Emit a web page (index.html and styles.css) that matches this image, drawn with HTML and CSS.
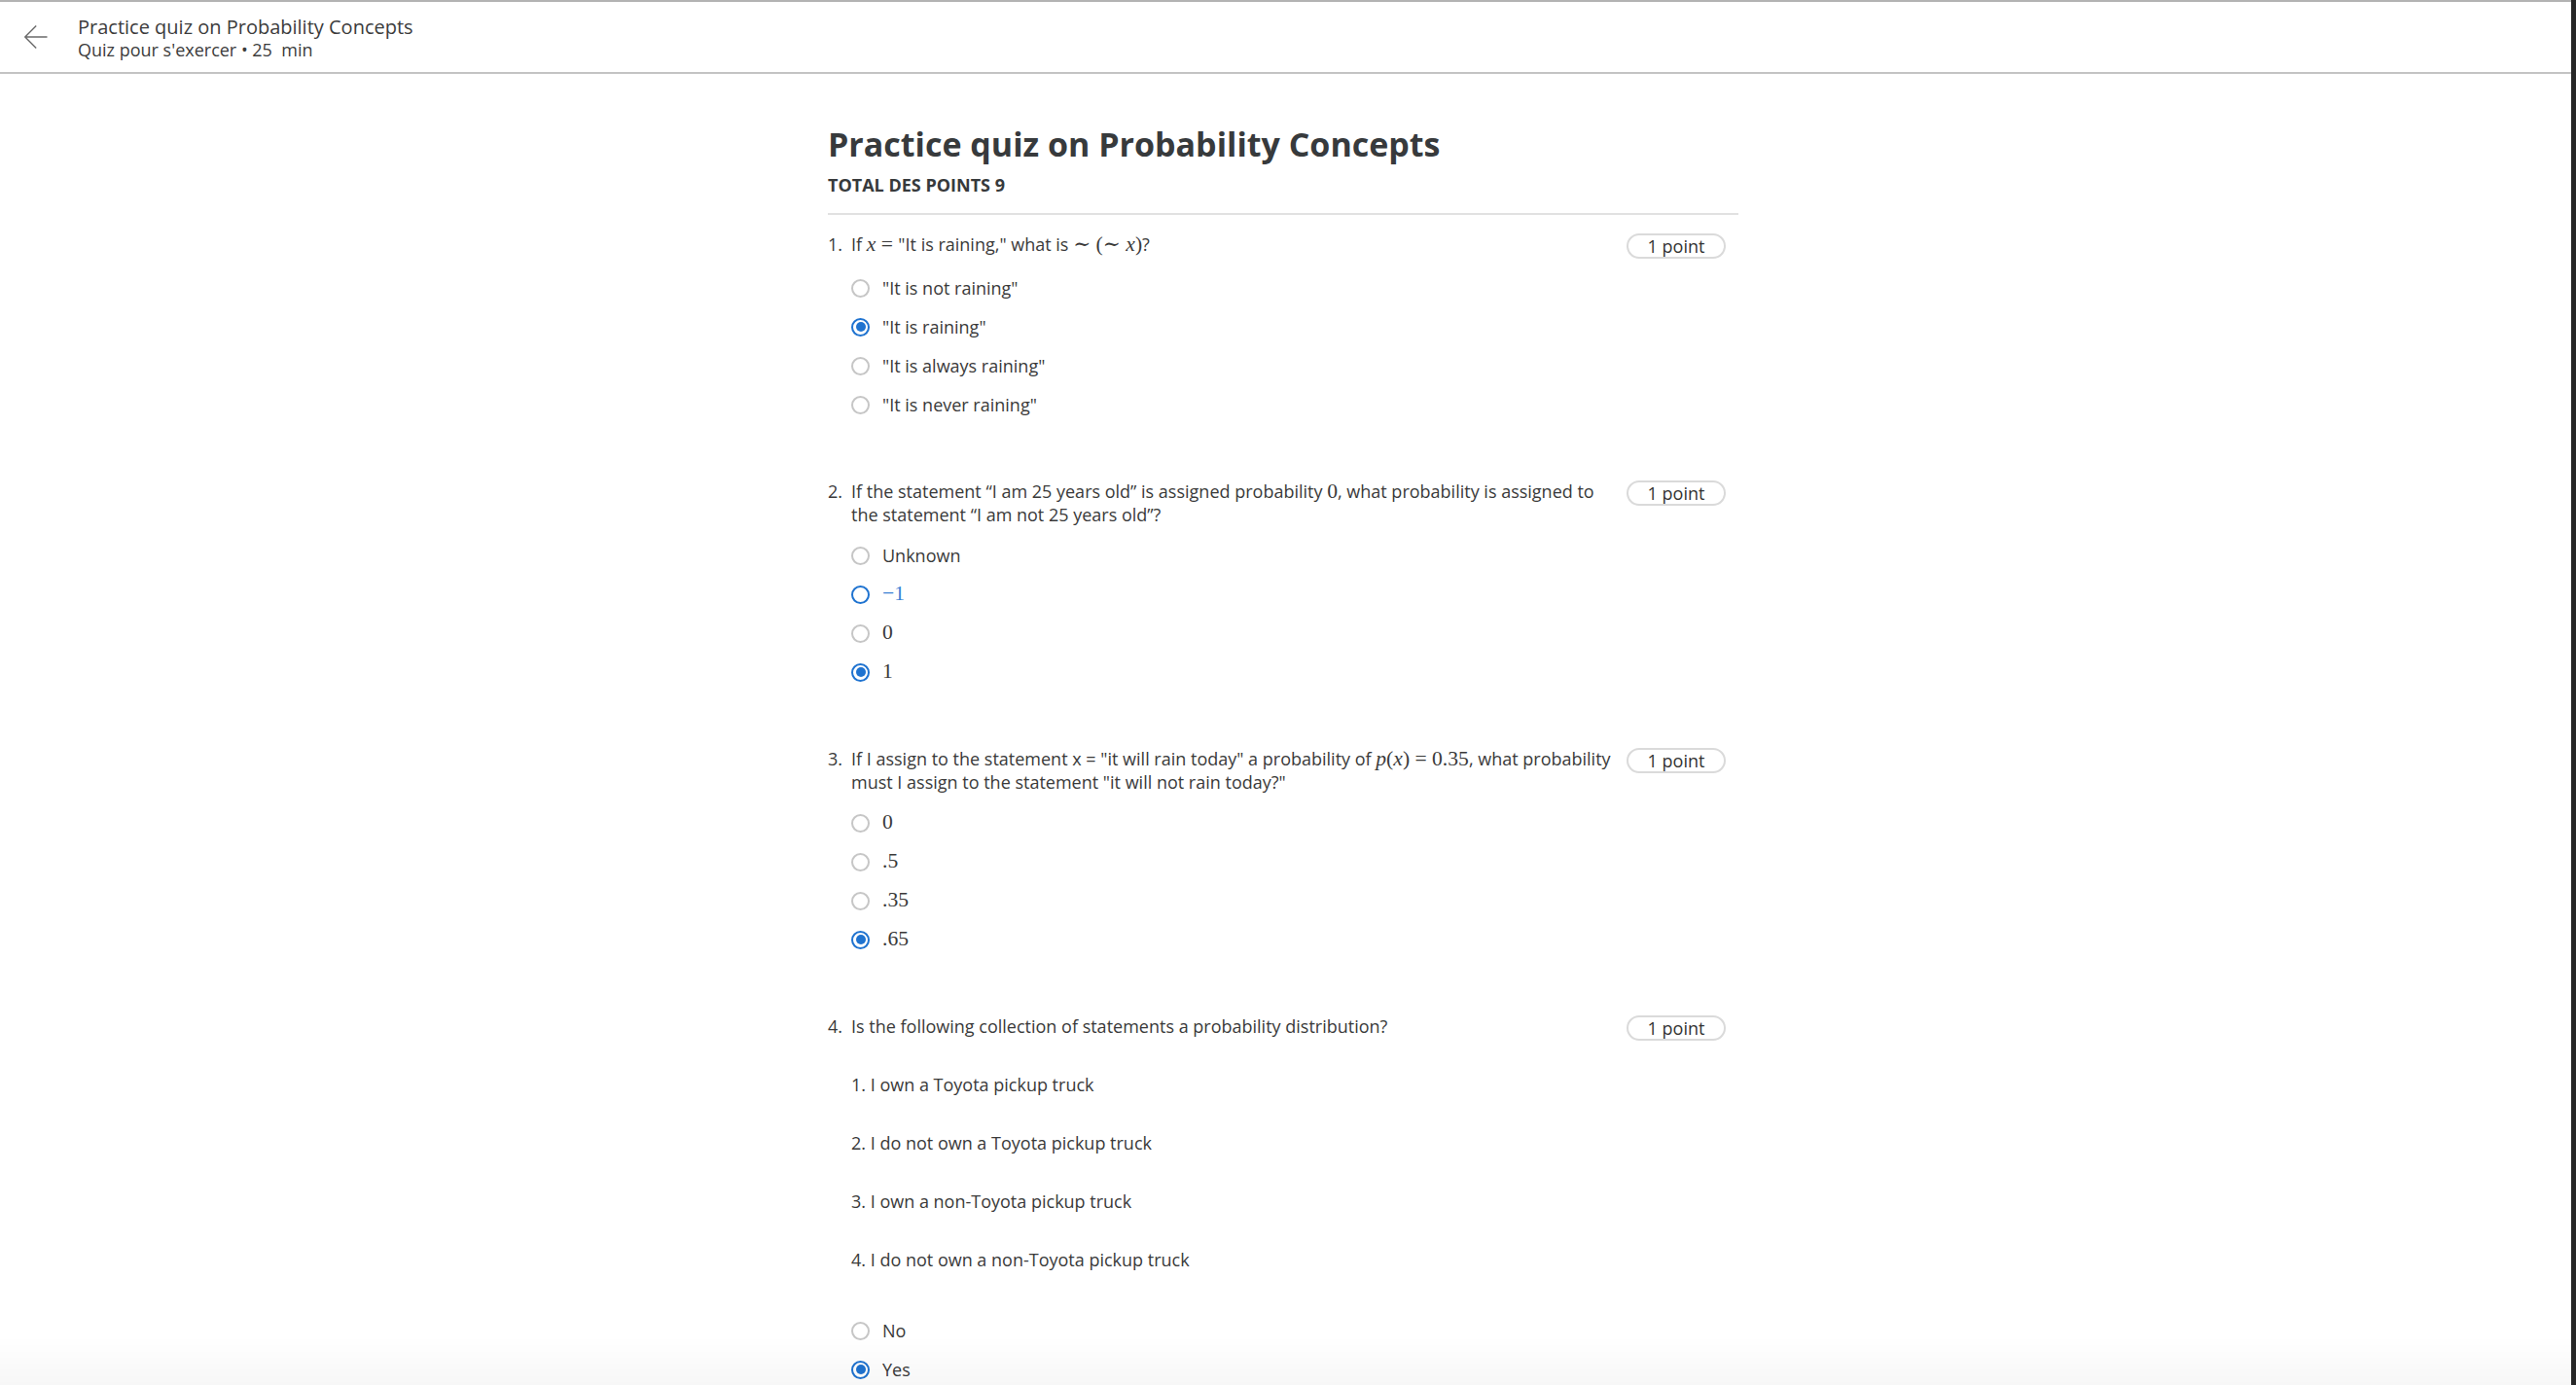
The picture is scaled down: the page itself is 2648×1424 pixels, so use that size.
FILE: index.html
```html
<!DOCTYPE html>
<html lang="en">
<head>
<meta charset="utf-8">
<title>Practice quiz on Probability Concepts</title>
<link rel="stylesheet" href="styles.css">
</head>
<body>
<div class="app">
  <div class="page">
    <header class="topbar">
      <button class="back" aria-label="Back">
        <svg viewBox="0 0 24 24" width="24" height="24" aria-hidden="true"><path d="M23.5 12H0.8M12.2 0.6L0.8 12L12.2 23.4" fill="none" stroke="#6b6b6b" stroke-width="1.4"/></svg>
      </button>
      <div class="crumb">
        <div class="crumb-title">Practice quiz on Probability Concepts</div>
        <div class="crumb-sub">Quiz pour s'exercer • 25&nbsp; min</div>
      </div>
    </header>

    <main class="content">
      <div class="quiz">
        <h1 class="quiz-title">Practice quiz on Probability Concepts</h1>
        <div class="quiz-total">TOTAL DES POINTS 9</div>

        <div class="questions">
          <section class="question">
            <div class="q-head">
              <span class="q-num">1.</span>
              <div class="q-text">If <span class="m"><i>x</i> = </span>"It is raining," what is <span class="m">∼ (∼ <i>x</i>)</span>?</div>
              <span class="q-points">1 point</span>
            </div>
            <div class="options">
              <label class="option"><span class="radio"></span><span>"It is not raining"</span></label>
              <label class="option"><span class="radio checked"></span><span>"It is raining"</span></label>
              <label class="option"><span class="radio"></span><span>"It is always raining"</span></label>
              <label class="option"><span class="radio"></span><span>"It is never raining"</span></label>
            </div>
          </section>

          <section class="question">
            <div class="q-head">
              <span class="q-num">2.</span>
              <div class="q-text">If the statement “I am 25 years old” is assigned probability <span class="m">0</span>, what probability is assigned to<br>the statement “I am not 25 years old”?</div>
              <span class="q-points">1 point</span>
            </div>
            <div class="options">
              <label class="option"><span class="radio"></span><span>Unknown</span></label>
              <label class="option option-focus"><span class="radio focus"></span><span class="m">−1</span></label>
              <label class="option"><span class="radio"></span><span class="m">0</span></label>
              <label class="option"><span class="radio checked"></span><span class="m">1</span></label>
            </div>
          </section>

          <section class="question">
            <div class="q-head">
              <span class="q-num">3.</span>
              <div class="q-text">If I assign to the statement x = "it will rain today" a probability of <span class="m"><i>p</i>(<i>x</i>) = 0.35</span>, what probability<br>must I assign to the statement "it will not rain today?"</div>
              <span class="q-points">1 point</span>
            </div>
            <div class="options">
              <label class="option"><span class="radio"></span><span class="m">0</span></label>
              <label class="option"><span class="radio"></span><span class="m">.5</span></label>
              <label class="option"><span class="radio"></span><span class="m">.35</span></label>
              <label class="option"><span class="radio checked"></span><span class="m">.65</span></label>
            </div>
          </section>

          <section class="question">
            <div class="q-head">
              <span class="q-num">4.</span>
              <div class="q-text">Is the following collection of statements a probability distribution?</div>
              <span class="q-points">1 point</span>
            </div>
            <div class="q-list">
              <p>1. I own a Toyota pickup truck</p>
              <p>2. I do not own a Toyota pickup truck</p>
              <p>3. I own a non-Toyota pickup truck</p>
              <p>4. I do not own a non-Toyota pickup truck</p>
            </div>
            <div class="options options-spaced">
              <label class="option"><span class="radio"></span><span>No</span></label>
              <label class="option"><span class="radio checked"></span><span>Yes</span></label>
            </div>
          </section>
        </div>
      </div>
    </main>
  </div>
  <div class="side-strip"></div>
</div>
<div class="bottom-fade"></div>
</body>
</html>
```

FILE: styles.css
```css
html, body {
  margin: 0;
  height: 100%;
  overflow: hidden;
}

body {
  font-family: "Open Sans", "Noto Sans", "Liberation Sans", sans-serif;
  color: #3a3a3a;
  background: #fff;
}

.app {
  display: flex;
  height: 100vh;
}

.page {
  flex: 1;
  min-width: 0;
}

.side-strip {
  width: 5px;
  flex: none;
  background: #272727;
}

/* Header */
.topbar {
  display: flex;
  align-items: center;
  height: 72px;
  border-top: 2px solid #b3b3b3;
  border-bottom: 2px solid #c3c3c3;
}

.back {
  margin-left: 25px;
  width: 24px;
  height: 24px;
  padding: 0;
  border: 0;
  background: none;
  display: flex;
}

.crumb {
  margin-left: 31px;
  padding-top: 3px;
  color: #3c3c3c;
}

.crumb-title {
  font-size: 20px;
  line-height: 22px;
}

.crumb-sub {
  font-size: 18px;
  line-height: 24px;
}

/* Main */
.content {
  padding-right: 5px;
}

.quiz {
  width: 936px;
  margin: 0 auto;
  padding-top: 50px;
}

.quiz-title {
  margin: 0;
  font-size: 34px;
  line-height: 44px;
  font-weight: 700;
  color: #373a3c;
}

.quiz-total {
  margin-top: 8px;
  font-size: 18px;
  line-height: 24px;
  font-weight: 700;
  color: #373a3c;
}

.questions {
  margin-top: 17px;
  border-top: 2px solid #e1e1e1;
  padding-top: 18px;
}

.question + .question {
  margin-top: 57px;
}

.q-head {
  display: flex;
  align-items: flex-start;
  padding-right: 13px;
}

.q-num {
  width: 24px;
  flex: none;
  font-size: 18px;
  line-height: 24px;
}

.q-text {
  flex: 1;
  min-width: 0;
  margin-right: 8px;
  font-size: 18px;
  line-height: 24px;
  white-space: nowrap;
}

.q-points {
  flex: none;
  width: 102px;
  height: 26px;
  margin-top: 1px;
  box-sizing: border-box;
  border: 2px solid #dadada;
  border-radius: 13px;
  text-align: center;
  font-size: 18px;
  line-height: 22px;
  color: #333;
}

.m {
  font-family: "Liberation Serif", "DejaVu Serif", serif;
  font-size: 1.2em;
  line-height: 1;
}

.m i {
  font-style: italic;
}

.options {
  margin-top: 10px;
  margin-left: 24px;
  display: flex;
  flex-direction: column;
}

.options-spaced {
  margin-top: 41px;
}

.option {
  display: flex;
  align-items: center;
  gap: 13px;
  height: 40px;
  font-size: 18px;
}

.option-focus {
  color: #3b82d4;
}

.radio {
  width: 19px;
  height: 19px;
  flex: none;
  box-sizing: border-box;
  border: 2px solid #c6c6c6;
  border-radius: 50%;
  display: flex;
  align-items: center;
  justify-content: center;
}

.radio.checked,
.radio.focus {
  border-color: #1f73d0;
}

.radio.checked::after {
  content: "";
  width: 10px;
  height: 10px;
  border-radius: 50%;
  background: #1f73d0;
}

.q-list {
  margin: 33px 0 0 24px;
  display: flex;
  flex-direction: column;
  gap: 36px;
}

.q-list p {
  margin: 0;
  font-size: 18px;
  line-height: 24px;
}

.bottom-fade {
  position: fixed;
  left: 0;
  right: 5px;
  bottom: 0;
  height: 50px;
  background: linear-gradient(rgba(0, 0, 0, 0), rgba(0, 0, 0, 0.03));
  pointer-events: none;
}
```
